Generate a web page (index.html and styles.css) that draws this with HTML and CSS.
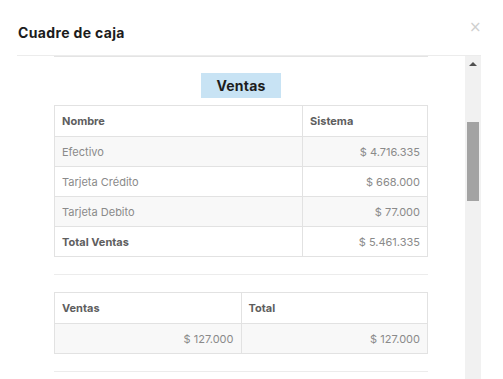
FILE: index.html
```html
<!DOCTYPE html>
<html lang="es">
<head>
<meta charset="utf-8">
<title>Cuadre de caja</title>
<link rel="stylesheet" href="styles.css">
</head>
<body>
<div class="modal">
  <header class="modal-header">
    <h4 class="modal-title">Cuadre de caja</h4>
    <button class="close" type="button">×</button>
  </header>
  <div class="modal-body">
    <div class="content">
      <hr class="sep top">
      <div class="badge-wrap"><span class="badge">Ventas</span></div>
      <table class="tbl tbl-ventas">
        <thead>
          <tr><th class="c-name">Nombre</th><th>Sistema</th></tr>
        </thead>
        <tbody>
          <tr class="odd"><td>Efectivo</td><td class="num">$ 4.716.335</td></tr>
          <tr><td>Tarjeta Crédito</td><td class="num">$ 668.000</td></tr>
          <tr class="odd"><td>Tarjeta Debito</td><td class="num">$ 77.000</td></tr>
          <tr><td class="strong">Total Ventas</td><td class="num">$ 5.461.335</td></tr>
        </tbody>
      </table>
      <hr class="sep">
      <table class="tbl tbl-total">
        <thead>
          <tr><th>Ventas</th><th>Total</th></tr>
        </thead>
        <tbody>
          <tr class="odd"><td class="num">$ 127.000</td><td class="num">$ 127.000</td></tr>
        </tbody>
      </table>
      <hr class="sep">
    </div>
    <div class="scrollbar">
      <span class="arrow"></span>
      <span class="thumb"></span>
    </div>
  </div>
</div>
</body>
</html>
```

FILE: styles.css
```css
html, body {
  margin: 0;
  padding: 0;
  background: #fff;
  height: 100%;
  overflow: hidden;
}
body {
  font-family: "Inter", "Open Sans", sans-serif;
}
.modal {
  margin-left: 17px;
  width: 464px;
}
.modal-header {
  display: flex;
  justify-content: space-between;
  align-items: flex-start;
  height: 56px;
  border-bottom: 1px solid #ececec;
  box-sizing: border-box;
}
.modal-title {
  margin: 24px 0 0 1px;
  font-size: 14px;
  font-weight: 700;
  color: #1c1c1c;
  letter-spacing: 0.35px;
}
.close {
  margin: 20px 0 0 0;
  padding: 0;
  border: 0;
  background: none;
  color: #cfcfcf;
  font-size: 15px;
  line-height: 15px;
  font-family: "DejaVu Sans", sans-serif;
  width: 12px;
}
.modal-body {
  display: flex;
  height: 330px;
}
.content {
  flex: 1;
  padding: 0 37px;
}
.sep {
  border: 0;
  border-top: 1px solid #ececec;
  margin: 17px 0 0;
}
.sep.top {
  margin: 0;
  border-top-color: #e4e4e4;
}
.badge-wrap {
  display: flex;
  justify-content: center;
  margin-top: 16px;
}
.badge {
  display: inline-block;
  width: 80px;
  height: 25px;
  line-height: 25px;
  text-align: center;
  background: #c8e3f4;
  color: #1d1d1d;
  font-weight: 700;
  font-size: 14px;
  letter-spacing: 0.2px;
}
.tbl {
  width: 100%;
  border-collapse: collapse;
  font-size: 11px;
  margin-top: 7px;
  border: 1px solid #e2e2e2;
}
.tbl-total {
  margin-top: 17px;
}
.tbl th, .tbl td {
  border: 1px solid #e2e2e2;
  padding: 0 7px;
  text-align: left;
}
.tbl th {
  height: 30px;
  font-weight: 700;
  color: #5e5e5e;
}
.tbl td {
  height: 29px;
  color: #8a8a8a;
}
.tbl tr.odd td {
  background: #f8f8f8;
}
.tbl td.num {
  text-align: right;
}
.tbl td.strong {
  font-weight: 700;
  color: #5e5e5e;
}
.tbl-ventas .c-name {
  width: 66.5%;
}
.tbl-total th {
  width: 50%;
}
.scrollbar {
  width: 16px;
  background: #f1f1f1;
  display: flex;
  flex-direction: column;
  align-items: center;
}
.arrow {
  margin-top: 6px;
  width: 0;
  height: 0;
  border-left: 4px solid transparent;
  border-right: 4px solid transparent;
  border-bottom: 4px solid #505050;
}
.thumb {
  margin-top: 56px;
  width: 12px;
  height: 79px;
  background: #a3a3a3;
}
```
